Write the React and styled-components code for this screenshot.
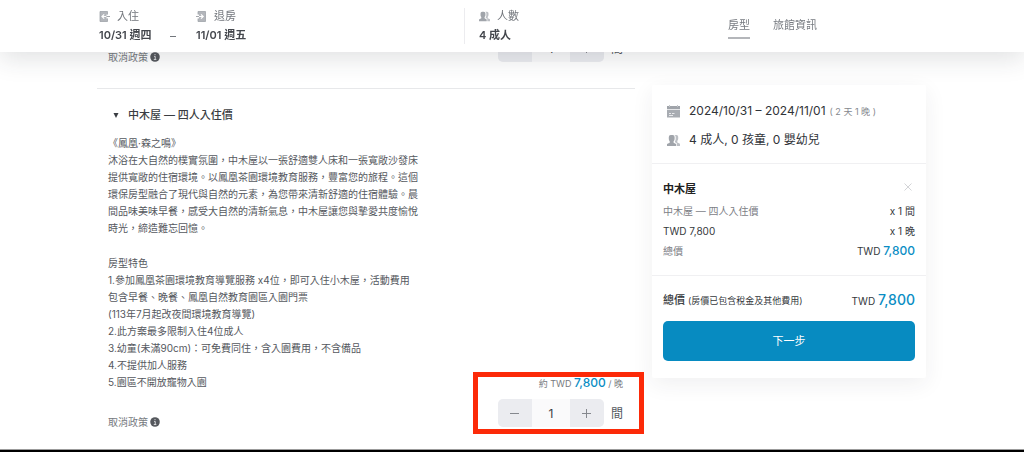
import React, { useState } from "react";
import styled, { createGlobalStyle } from "styled-components";

const GlobalStyle = createGlobalStyle`
  * { box-sizing: border-box; }
  body {
    margin: 0;
    background: #fff;
    color: #3d4045;
    font-family: Inter, "Noto Sans CJK TC", sans-serif;
    font-size: 10px;
    line-height: 17px;
  }
  h1, h2, p, ul, ol, dl, dd, dt { margin: 0; padding: 0; font-size: inherit; font-weight: inherit; }
  button, input { font: inherit; color: inherit; border: 0; padding: 0; margin: 0; background: none; }
  button { cursor: pointer; }
  a { color: inherit; text-decoration: none; }
  svg { display: block; flex: none; }
`;

const Page = styled.div`
  min-height: 100vh;
  display: flex;
  flex-direction: column;
`;

const TopBar = styled.header`
  position: fixed;
  inset: 0 0 auto;
  z-index: 2;
  background: #fff;
  box-shadow: 0 6px 26px rgba(40, 44, 52, 0.15);
`;

const TopBarInner = styled.div`
  max-width: 830px;
  height: 52px;
  margin: 0 auto;
  padding-left: 2px;
  display: grid;
  grid-template-columns: 365px 1fr auto;
  align-items: center;
`;

const Dates = styled.div`
  display: grid;
  grid-template-columns: 71px 26px auto;
  align-items: end;
  justify-content: start;
`;

const Field = styled.div`
  display: grid;
  gap: 2px;
`;

const FieldLabel = styled.span`
  display: flex;
  align-items: center;
  gap: 7px;
  font-size: 11px;
  color: #72767c;
`;

const FieldValue = styled.strong`
  font-size: 11px;
  font-weight: 600;
  color: #43464c;
`;

const Dash = styled.span`
  font-size: 12px;
  color: #72767c;
`;

const Guests = styled.div`
  border-left: 1px solid #ececef;
  padding-left: 14px;
`;

const Nav = styled.nav`
  display: flex;
  gap: 23px;
  padding-right: 110px;
  font-size: 11px;
`;

const NavLink = styled.a`
  color: #777b81;
  padding: 4px 0 3px;
  border-bottom: 2px solid ${(p) => (p.$active ? "#b4b6ba" : "transparent")};
`;

const Content = styled.main`
  flex: 1;
  width: 100%;
  max-width: 830px;
  margin: 0 auto;
  padding-right: 1px;
  display: grid;
  grid-template-columns: 1fr 274px;
  gap: 17px;
  align-items: start;
`;

const Offers = styled.div`
  display: flex;
  flex-direction: column;
  gap: 4px;
  padding-top: 34px;
`;

const Offer = styled.section`
  display: grid;
  grid-template-columns: 310px 1fr;
  align-items: end;
  padding: 0 12px 20px 11px;
`;

const DetailedOffer = styled(Offer)`
  border-top: 1px solid #e7e8ea;
  padding-top: 17px;
`;

const OfferToggle = styled.button`
  display: flex;
  align-items: center;
  gap: 9px;
  padding-left: 5px;
  margin-bottom: 11px;
  font-size: 11px;
  font-weight: 500;
  line-height: 18px;
  color: #3a3d42;
`;

const Intro = styled.div`
  margin-bottom: 18px;
  color: #55585e;
`;

const Features = styled.div`
  margin-bottom: 24px;
  color: #55585e;
`;

const PolicyButton = styled.button`
  display: flex;
  align-items: center;
  gap: 2px;
  line-height: 14px;
  color: #777a80;
`;

const Booking = styled.div`
  position: relative;
  display: grid;
  justify-items: end;
  gap: 7px;
  padding-bottom: 2px;
`;

const Price = styled.p`
  font-size: 9px;
  line-height: 16px;
  color: #777a80;
`;

const Amount = styled.span`
  color: #0a8dc4;
  font-weight: 500;
  font-size: ${(p) => (p.$large ? 14 : 12)}px;
`;

const Quantity = styled.div`
  display: flex;
  align-items: center;
  gap: 7px;
  font-size: 12px;
  color: #55585e;
`;

const Stepper = styled.div`
  display: flex;
  height: 28px;
  border-radius: 5px;
  overflow: hidden;
  background: #fafafb;
`;

const StepButton = styled.button`
  width: 34px;
  display: grid;
  place-items: center;
  background: #ebecf0;
  color: #85888e;
`;

const Count = styled.input`
  width: 38px;
  text-align: center;
  font-size: 12px;
  color: #3d4045;
`;

const Highlight = styled.div`
  position: absolute;
  inset: -3px -21px -5px auto;
  width: 171px;
  border: 5px solid #fc2a08;
  pointer-events: none;
`;

const Summary = styled.aside`
  margin-top: 85px;
  background: #fff;
  border-radius: 2px;
  box-shadow: 0 6px 22px rgba(40, 44, 52, 0.07);
`;

const SummaryBlock = styled.section`
  padding: ${(p) => p.$pad};
  & + & { border-top: 1px solid #f0f0f2; }
`;

const StayLine = styled.p`
  display: flex;
  align-items: center;
  gap: 9px;
  padding-left: 4px;
  font-size: 12px;
  line-height: 28px;
  color: #303338;
`;

const StayNote = styled.small`
  font-size: 9px;
  margin-left: 4px;
  color: #85888e;
`;

const RoomHead = styled.div`
  display: flex;
  justify-content: space-between;
  align-items: center;
  line-height: 24px;
`;

const RoomName = styled.h2`
  font-size: 11px;
  font-weight: 600;
  color: #222;
`;

const RemoveButton = styled.button`
  color: #d3d4d7;
  padding: 0 3px 4px;
`;

const SummaryRow = styled.div`
  display: flex;
  justify-content: space-between;
  line-height: 20px;
  color: ${(p) => (p.$muted ? "#7d8086" : "#35383c")};
`;

const RowValue = styled.span`
  color: #35383c;
`;

const TotalRow = styled.div`
  display: flex;
  justify-content: space-between;
  align-items: center;
  line-height: 20px;
  margin-bottom: 10px;
  color: #35383c;
`;

const TotalLabel = styled.span`
  font-size: 11px;
  font-weight: 500;
`;

const TotalNote = styled.small`
  font-size: 9px;
  font-weight: 400;
`;

const NextButton = styled.button`
  display: block;
  width: 100%;
  height: 40px;
  border-radius: 5px;
  background: #078bc1;
  color: #fff;
  font-size: 11px;
`;

const BottomEdge = styled.footer`
  height: 3px;
  background: #000;
  border-top: 1px solid #9b9b9b;
`;

function CheckInIcon() {
  return (
    <svg width="11" height="11" viewBox="0 0 11 11" aria-hidden="true">
      <path d="M1 .5h7.500v3h-1v4h1v3H1z" fill="#b3b6bb" />
      <path d="M3.200 5.500h4.300M5.200 3.300L3 5.500l2.200 2.200" fill="none" stroke="#fff" strokeWidth="1.200" />
      <path d="M7.500 5.500H11" stroke="#a5a8ad" />
      <path d="M8.500 3.500v-3H1v10h7.500v-3" fill="none" stroke="#9fa3a9" strokeWidth=".8" />
    </svg>
  );
}

function CheckOutIcon() {
  return (
    <svg width="11" height="11" viewBox="0 0 11 11" aria-hidden="true">
      <path d="M2 .5h7.500v10H2v-3h1v-4H2z" fill="#b3b6bb" />
      <path d="M3 5.500h4.300M5 3.300l2.200 2.200L5 7.700" fill="none" stroke="#fff" strokeWidth="1.200" />
      <path d="M0 5.500h3" stroke="#a5a8ad" />
      <path d="M2 3.500v-3h7.500v10H2v-3" fill="none" stroke="#9fa3a9" strokeWidth=".8" />
    </svg>
  );
}

function PeopleIcon({ width = 11 }) {
  return (
    <svg width={width} height={width} viewBox="0 0 13 13" aria-hidden="true">
      <path
        d="M7.500 1h2q1.700 0 1.700 1.800v2q0 1.300-.9 2v1.700l2.700 1.200V12H9.800V9.300L8 8.200V7.300q.7-1 .7-2.300V3q0-1.300-1.200-2z"
        fill="#bcbfc4"
      />
      <path
        d="M3.700 1h2q1.900 0 1.900 1.900V5q0 1.400-1 2.200v1.500l2.500 1.200V12H0V9.900l2.700-1.200V7.200q-.9-.8-.9-2.200V2.900Q1.800 1 3.700 1z"
        fill="#a0a4aa"
      />
    </svg>
  );
}

function CalendarIcon() {
  return (
    <svg width="13" height="13" viewBox="0 0 13 13" aria-hidden="true">
      <path d="M0 1h13v3H0z" fill="#a0a4aa" />
      <path d="M2.500 0v2M10.500 0v2" stroke="#c4c7cb" />
      <path d="M0 4.700h13V12.500H0z" fill="#a8acb2" />
      <path d="M2 8.500h2M5 8.500h2.500M2 10.500h4" stroke="#e8e9eb" />
    </svg>
  );
}

function InfoIcon() {
  return (
    <svg width="10" height="10" viewBox="0 0 9 9" aria-hidden="true">
      <circle cx="4.500" cy="4.500" r="4.300" fill="#55585d" />
      <path d="M3.700 4h1v2.700M3.400 6.800h2.300M4 2.400h1" fill="none" stroke="#dcdddf" strokeWidth=".9" />
    </svg>
  );
}

function Sign({ plus }) {
  return (
    <svg width="9" height="9" viewBox="0 0 9 9" stroke="currentColor" aria-hidden="true">
      <path d={plus ? "M0 4.500h9M4.500 0v9" : "M0 4.500h9"} />
    </svg>
  );
}

function QuantityPicker({ initial, label }) {
  const [count, setCount] = useState(initial);
  return (
    <Quantity>
      <Stepper>
        <StepButton type="button" aria-label="減少" onClick={() => setCount(Math.max(0, count - 1))}>
          <Sign />
        </StepButton>
        <Count
          aria-label={label}
          inputMode="numeric"
          value={count}
          onChange={(e) => setCount(Number(e.target.value) || 0)}
        />
        <StepButton type="button" aria-label="增加" onClick={() => setCount(count + 1)}>
          <Sign plus />
        </StepButton>
      </Stepper>
      間
    </Quantity>
  );
}

function CancelPolicy() {
  return (
    <PolicyButton type="button">
      取消政策
      <InfoIcon />
    </PolicyButton>
  );
}

const features = [
  "1.參加鳳凰茶園環境教育導覽服務 x4位，即可入住小木屋，活動費用包含早餐、晚餐、鳳凰自然教育園區入園門票",
  "(113年7月起改夜間環境教育導覽)",
  "2.此方案最多限制入住4位成人",
  "3.幼童(未滿90cm)：可免費同住，含入園費用，不含備品",
  "4.不提供加人服務",
  "5.園區不開放寵物入園",
];

export default function App() {
  return (
    <Page>
      <GlobalStyle />
      <TopBar>
        <TopBarInner>
          <Dates>
            <Field>
              <FieldLabel><CheckInIcon />入住</FieldLabel>
              <FieldValue>10/31 週四</FieldValue>
            </Field>
            <Dash>–</Dash>
            <Field>
              <FieldLabel><CheckOutIcon />退房</FieldLabel>
              <FieldValue>11/01 週五</FieldValue>
            </Field>
          </Dates>
          <Guests>
            <Field>
              <FieldLabel><PeopleIcon />人數</FieldLabel>
              <FieldValue>4 成人</FieldValue>
            </Field>
          </Guests>
          <Nav>
            <NavLink href="#rooms" $active>房型</NavLink>
            <NavLink href="#info">旅館資訊</NavLink>
          </Nav>
        </TopBarInner>
      </TopBar>

      <Content>
        <Offers id="rooms">
          <Offer>
            <CancelPolicy />
            <Booking>
              <QuantityPicker initial={1} label="間數" />
            </Booking>
          </Offer>
          <DetailedOffer>
            <div>
              <OfferToggle type="button" aria-expanded="true">
                <svg width="6" height="5" viewBox="0 0 6 5" aria-hidden="true">
                  <path d="M.5 0h5L3 5z" fill="#3a3d42" />
                </svg>
                中木屋 — 四人入住價
              </OfferToggle>
              <Intro>
                <p>《鳳凰·森之鳴》</p>
                <p>
                  沐浴在大自然的樸實氛圍，中木屋以一張舒適雙人床和一張寬敞沙發床提供寬敞的住宿環境。以鳳凰茶園環境教育服務，豐富您的旅程。這個環保房型融合了現代與自然的元素，為您帶來清新舒適的住宿體驗。晨間品味美味早餐，感受大自然的清新氣息，中木屋讓您與摯愛共度愉悅時光，締造難忘回憶。
                </p>
              </Intro>
              <Features>
                <p>房型特色</p>
                {features.map((text) => <p key={text}>{text}</p>)}
              </Features>
              <CancelPolicy />
            </div>
            <Booking>
              <Price>約 TWD <Amount>7,800</Amount> / 晚</Price>
              <QuantityPicker initial={1} label="間數" />
              <Highlight />
            </Booking>
          </DetailedOffer>
        </Offers>

        <Summary>
          <SummaryBlock $pad="12px 11px 9px">
            <StayLine>
              <CalendarIcon />
              <span>2024/10/31 – 2024/11/01<StayNote>( 2 天 1 晚 )</StayNote></span>
            </StayLine>
            <StayLine>
              <PeopleIcon width={13} />
              4 成人, 0 孩童, 0 嬰幼兒
            </StayLine>
          </SummaryBlock>
          <SummaryBlock $pad="13px 11px 14px">
            <RoomHead>
              <RoomName>中木屋</RoomName>
              <RemoveButton type="button" aria-label="移除">
                <svg width="8" height="8" viewBox="0 0 8 8" stroke="currentColor" aria-hidden="true">
                  <path d="M.5.5l7 7M7.500.5l-7 7" />
                </svg>
              </RemoveButton>
            </RoomHead>
            <SummaryRow $muted>中木屋 — 四人入住價<RowValue>x 1 間</RowValue></SummaryRow>
            <SummaryRow>TWD 7,800<RowValue>x 1 晚</RowValue></SummaryRow>
            <SummaryRow $muted>總價<RowValue>TWD <Amount>7,800</Amount></RowValue></SummaryRow>
          </SummaryBlock>
          <SummaryBlock $pad="14px 11px 17px">
            <TotalRow>
              <TotalLabel>總價 <TotalNote>(房價已包含稅金及其他費用)</TotalNote></TotalLabel>
              <span>TWD <Amount $large>7,800</Amount></span>
            </TotalRow>
            <NextButton type="button">下一步</NextButton>
          </SummaryBlock>
        </Summary>
      </Content>
      <BottomEdge />
    </Page>
  );
}
